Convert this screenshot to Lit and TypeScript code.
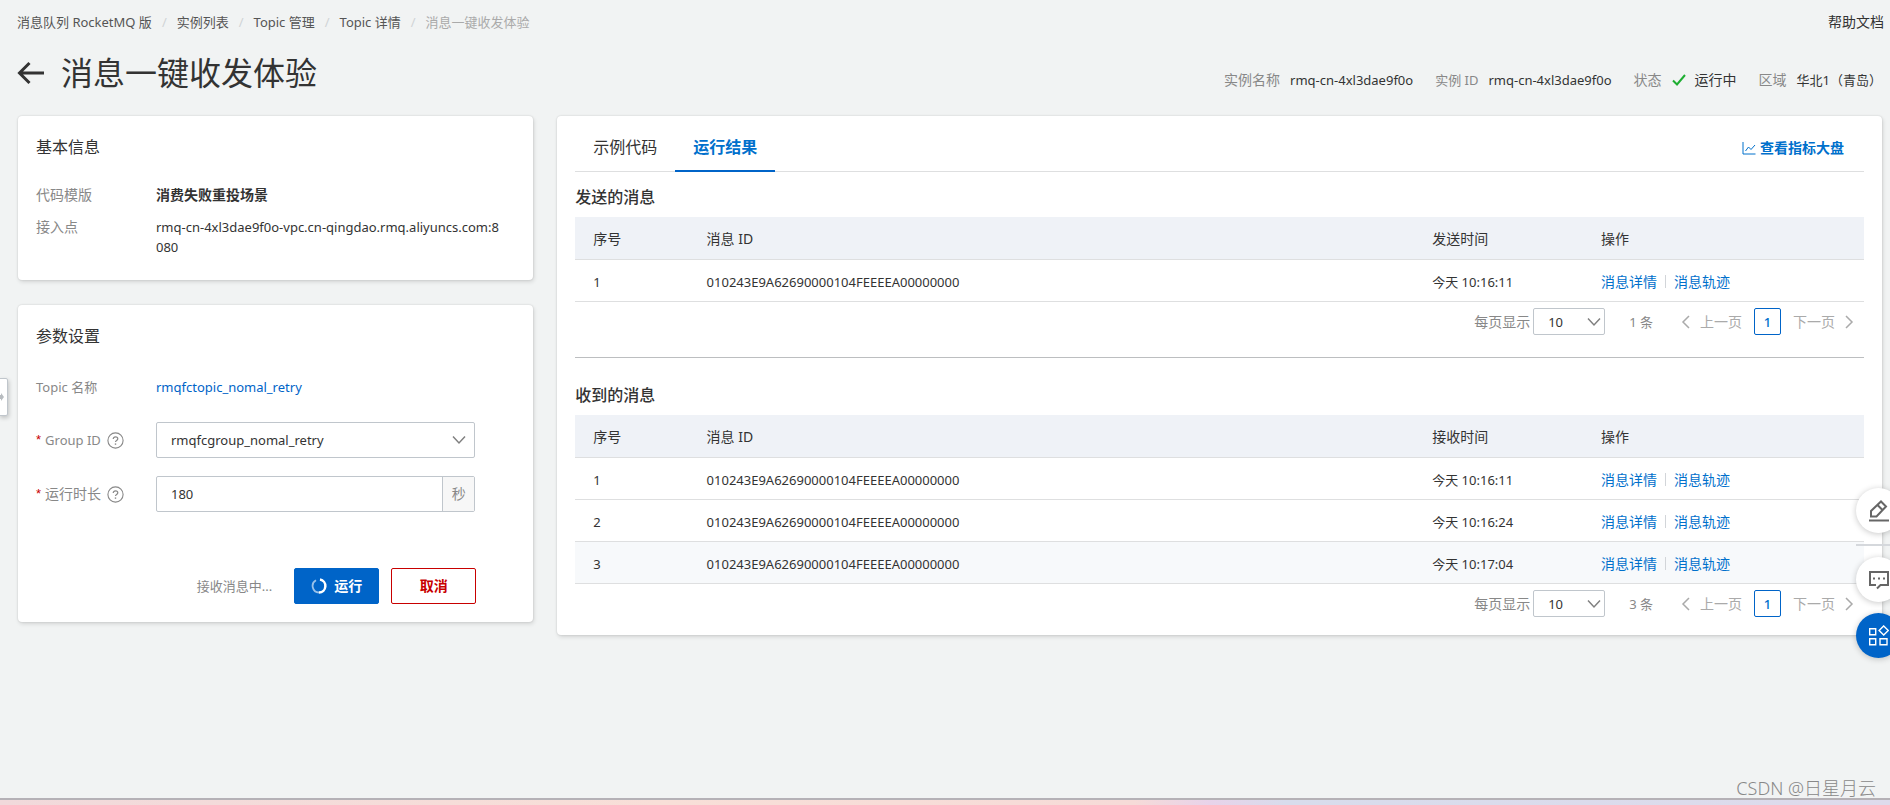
import { LitElement, html, css } from "lit";
import { customElement, property } from "lit/decorators.js";

interface Message {
  id: string;
  time: string;
  hovered?: boolean;
}

const MESSAGE_ID = "010243E9A62690000104FEEEEA00000000";

const SENT: Message[] = [{ id: MESSAGE_ID, time: "今天 10:16:11" }];

const RECEIVED: Message[] = [
  { id: MESSAGE_ID, time: "今天 10:16:11" },
  { id: MESSAGE_ID, time: "今天 10:16:24" },
  { id: MESSAGE_ID, time: "今天 10:17:04", hovered: true },
];

const shared = css`
  *,
  *::before,
  *::after {
    box-sizing: border-box;
  }
  h1,
  h2,
  h3,
  p,
  dl,
  dd,
  ol {
    margin: 0;
    padding: 0;
  }
  a {
    color: #0070cc;
    text-decoration: none;
  }
  button,
  input,
  select {
    font: inherit;
    margin: 0;
  }
  svg {
    display: block;
    fill: none;
    flex: none;
  }
  .select {
    display: grid;
    align-items: center;
  }
  .select > * {
    grid-area: 1 / 1;
  }
  .select select {
    appearance: none;
    width: 100%;
    height: 100%;
    border: 1px solid #c0c6cc;
    border-radius: 2px;
    background: #fff;
    color: #333;
    padding: 0 14px;
    font-size: 13px;
  }
  .select svg {
    justify-self: end;
    pointer-events: none;
    stroke: #808080;
  }
`;

const chevron = html`<svg width="14" height="10" viewBox="0 0 14 10" aria-hidden="true">
  <path d="M1 1.500 7 8l6-6.500" stroke-width="1.500" />
</svg>`;

const helpIcon = html`<svg class="help" width="17" height="17" viewBox="0 0 17 17" aria-hidden="true">
  <circle cx="8.500" cy="8.500" r="7.600" stroke-width="1.100" />
  <path d="M6.200 7c0-1.400 1-2.200 2.300-2.200s2.300.8 2.300 2c0 1.700-2.300 1.700-2.300 3.300" stroke-width="1.200" />
  <path d="M8.500 11.400v1.400" stroke-width="1.400" />
</svg>`;

@customElement("message-list")
export class MessageList extends LitElement {
  @property() heading = "";
  @property() timeLabel = "";
  @property({ attribute: false }) messages: Message[] = [];

  static styles = [
    shared,
    css`
      :host {
        display: block;
      }
      h3 {
        font-size: 16px;
        line-height: 24px;
        font-weight: 500;
        color: #333;
        margin-bottom: 8px;
      }
      table {
        width: 100%;
        border-collapse: separate;
        border-spacing: 0;
        table-layout: fixed;
        color: #333;
      }
      .index {
        width: 8.8%;
      }
      .time {
        width: 13.1%;
      }
      .actions {
        width: 21.8%;
      }
      th,
      td {
        text-align: left;
        font-weight: 400;
        height: 42px;
        padding: 2px 18px 0;
        border-bottom: 1px solid #dedfe0;
        font-size: 13px;
      }
      th {
        height: 43px;
        background: #eff2f7;
        font-size: 14px;
      }
      .hovered td {
        background: #f7f9fb;
      }
      .links {
        display: flex;
        align-items: center;
        font-size: 14px;
      }
      .links a + a {
        display: flex;
        align-items: center;
      }
      .links a + a::before {
        content: "";
        height: 13px;
        border-left: 1px solid #d2d5d9;
        margin: 0 8px;
      }
      .pager {
        display: flex;
        justify-content: flex-end;
        align-items: center;
        padding: 6px 10px 0 0;
        color: #888;
        font-size: 14px;
        line-height: 20px;
      }
      .size {
        display: flex;
        align-items: center;
        gap: 3px;
      }
      .pager .select {
        width: 72px;
        height: 27px;
      }
      .pager .select svg {
        margin-right: 4px;
      }
      .total {
        font-size: 13px;
        margin: 0 28px 0 24px;
      }
      nav {
        display: flex;
        align-items: center;
        gap: 12px;
      }
      nav button {
        display: flex;
        align-items: center;
        gap: 10px;
        padding: 0;
        border: 0;
        background: none;
        color: #aaa;
      }
      nav svg {
        stroke: #aaa;
      }
      nav .current {
        width: 27px;
        height: 27px;
        justify-content: center;
        border: 1px solid #0064c8;
        border-radius: 2px;
        background: #fff;
        color: #0070cc;
        font-size: 13px;
        font-weight: 500;
      }
    `,
  ];

  render() {
    return html`
      <h3>${this.heading}</h3>
      <table>
        <thead>
          <tr>
            <th class="index" scope="col">序号</th>
            <th scope="col">消息 ID</th>
            <th class="time" scope="col">${this.timeLabel}</th>
            <th class="actions" scope="col">操作</th>
          </tr>
        </thead>
        <tbody>
          ${this.messages.map(
            (m, i) => html`<tr class=${m.hovered ? "hovered" : ""}>
              <td>${i + 1}</td>
              <td>${m.id}</td>
              <td>${m.time}</td>
              <td><div class="links"><a href="#detail">消息详情</a><a href="#trace">消息轨迹</a></div></td>
            </tr>`
          )}
        </tbody>
      </table>
      <div class="pager">
        <div class="size">
          <label for="size">每页显示</label>
          <div class="select">
            <select id="size"><option>10</option></select>
            ${chevron}
          </div>
        </div>
        <span class="total">${this.messages.length} 条</span>
        <nav aria-label="分页">
          <button type="button">
            <svg width="9" height="14" viewBox="0 0 9 14"><path d="M8 1 2 7l6 6" stroke-width="1.500" /></svg>上一页
          </button>
          <button type="button" class="current">1</button>
          <button type="button">
            下一页<svg width="9" height="14" viewBox="0 0 9 14"><path d="m1 1 6 6-6 6" stroke-width="1.500" /></svg>
          </button>
        </nav>
      </div>
    `;
  }
}

@customElement("app-root")
export class AppRoot extends LitElement {
  static styles = [
    shared,
    css`
      :host {
        display: flex;
        flex-direction: column;
        min-height: 100vh;
        box-sizing: border-box;
        background: #f1f3f3;
        color: #333;
        font-family: "Noto Sans", "Noto Sans CJK SC", sans-serif;
        font-size: 14px;
        line-height: 20px;
      }
      .top {
        display: flex;
        justify-content: space-between;
        padding: 12px 6px 0 17px;
      }
      .top a {
        color: #333;
      }
      .top .crumbs a {
        color: #555;
      }
      .crumbs {
        display: flex;
        list-style: none;
        font-size: 13px;
      }
      .crumbs li + li::before {
        content: "/";
        color: #d0d3d6;
        margin: 0 10px;
      }
      .crumbs [aria-current] {
        color: #aaa;
      }
      .heading {
        display: flex;
        justify-content: space-between;
        align-items: flex-end;
        padding: 21px 8px 23px 17px;
      }
      .title {
        display: flex;
        align-items: center;
        gap: 16px;
      }
      .back {
        padding: 0;
        border: 0;
        background: none;
      }
      .back svg {
        stroke: #333;
      }
      h1 {
        font-size: 32px;
        line-height: 40px;
        font-weight: 400;
      }
      .meta {
        display: flex;
        gap: 22px;
        padding-bottom: 3px;
      }
      .meta div {
        display: flex;
        gap: 10px;
      }
      .meta dt,
      .label {
        color: #888;
      }
      .meta dd {
        display: flex;
        align-items: center;
        gap: 9px;
      }
      .meta .latin,
      .latin {
        font-size: 13px;
      }
      main {
        flex: 1;
        display: grid;
        grid-template-columns: minmax(0, 7fr) minmax(0, 18fr);
        gap: 24px;
        align-items: start;
        padding: 0 8px 24px 18px;
      }
      .side {
        display: grid;
        gap: 25px;
      }
      .card {
        background: #fff;
        border-radius: 4px;
        box-shadow: 0 0 2px rgba(0, 0, 0, 0.16), 1px 2px 4px rgba(0, 0, 0, 0.12);
      }
      .info,
      .params {
        padding: 19px 18px;
      }
      h2 {
        font-size: 16px;
        line-height: 24px;
        font-weight: 400;
      }
      .row {
        display: grid;
        grid-template-columns: 120px minmax(0, 1fr);
        padding-right: 10px;
      }
      .info dl {
        display: grid;
        gap: 12px;
        padding: 26px 0 4px;
      }
      .info dd {
        word-break: break-all;
      }
      .info .template {
        font-weight: 700;
      }
      .params {
        padding-bottom: 18px;
      }
      .params .row {
        align-items: center;
        padding-right: 40px;
        margin-bottom: 18px;
      }
      .params .topic {
        margin: 29px 0 25px;
      }
      .topic a {
        color: #0064c8;
      }
      .label {
        display: flex;
        align-items: center;
        gap: 4px;
      }
      .required {
        color: #c80000;
        font-family: "Liberation Sans", sans-serif;
        font-size: 13px;
      }
      .help {
        stroke: #888;
        margin-left: 2px;
      }
      .field {
        height: 36px;
      }
      .field svg {
        margin-right: 9px;
      }
      .duration {
        display: flex;
        height: 36px;
        border: 1px solid #c0c6cc;
        border-radius: 2px;
      }
      .duration input {
        flex: 1;
        min-width: 0;
        border: 0;
        padding: 0 14px;
        background: none;
        color: #333;
        font-size: 13px;
      }
      .duration span {
        display: grid;
        place-items: center;
        width: 32px;
        border-left: 1px solid #c0c6cc;
        background: #f7f7f7;
        color: #888;
      }
      .buttons {
        display: flex;
        justify-content: flex-end;
        align-items: center;
        gap: 12px;
        margin-top: 56px;
        padding-right: 39px;
      }
      .buttons p {
        color: #888;
        margin-right: 10px;
        font-size: 13px;
      }
      .buttons button {
        display: flex;
        align-items: center;
        justify-content: center;
        gap: 7px;
        width: 85px;
        height: 36px;
        border: 1px solid #c80000;
        border-radius: 2px;
        background: #fff;
        color: #c80000;
        font-weight: 700;
      }
      .buttons .run {
        border-color: #0064c8;
        background: #0064c8;
        color: #fff;
      }
      .results {
        padding: 0 18px 18px;
      }
      .tabs {
        display: flex;
        align-items: center;
        border-bottom: 1px solid #dedfe0;
        margin-bottom: 13px;
      }
      .tabs button {
        height: 56px;
        margin-bottom: -1px;
        padding: 8px 18px 0;
        border: 0;
        border-bottom: 2px solid transparent;
        background: none;
        color: #333;
        font-size: 16px;
      }
      .tabs .active {
        color: #0070cc;
        font-weight: 700;
        border-bottom-color: #0064c8;
      }
      .dashboard {
        display: flex;
        align-items: center;
        gap: 4px;
        margin: 8px 20px 0 auto;
        font-weight: 700;
      }
      .dashboard svg {
        stroke: #0070cc;
      }
      hr {
        margin: 22px 0 25px;
        border: 0;
        border-top: 1px solid #bcbec0;
      }
      .handle {
        position: fixed;
        left: -1px;
        top: 378px;
        width: 9px;
        height: 38px;
        padding: 0;
        border: 1px solid #c0c6cc;
        border-radius: 0 2px 2px 0;
        background: #fff;
        box-shadow: 1px 2px 4px rgba(0, 0, 0, 0.2);
      }
      .handle svg {
        fill: #b8bcc0;
      }
      .tools {
        position: fixed;
        right: -11px;
        top: 488px;
        display: grid;
        gap: 11px;
      }
      .tools button {
        display: grid;
        place-items: center;
        width: 45px;
        height: 45px;
        padding: 0;
        border: 0;
        border-radius: 50%;
        background: #fff;
        box-shadow: 0 1px 6px rgba(0, 0, 0, 0.22);
      }
      .tools svg {
        stroke: #666;
      }
      .tools hr {
        width: 45px;
        margin: 0;
        border-top: 2px solid #d5d8dc;
      }
      .tools .apps {
        background: #0064c8;
      }
      .tools .apps svg {
        stroke: #fff;
      }
      footer {
        text-align: right;
      }
      footer p {
        padding-right: 14px;
        color: #888;
        font-size: 18px;
        font-weight: 300;
        line-height: 20px;
      }
      .strip {
        height: 7px;
        border-top: 2px solid #b5b1b6;
        background: linear-gradient(90deg, #f1d9db, #f8dfd8 35%, #f6dbd8 60%, #e8d3ea 64%, #d8dcec 68%, #dedbec);
      }
    `,
  ];

  render() {
    return html`
      <header>
        <div class="top">
          <nav aria-label="面包屑">
            <ol class="crumbs">
              <li><a href="#mq">消息队列 RocketMQ 版</a></li>
              <li><a href="#instances">实例列表</a></li>
              <li><a href="#topics">Topic 管理</a></li>
              <li><a href="#topic">Topic 详情</a></li>
              <li aria-current="page">消息一键收发体验</li>
            </ol>
          </nav>
          <a href="#help">帮助文档</a>
        </div>
        <div class="heading">
          <div class="title">
            <button class="back" type="button" aria-label="返回">
              <svg width="28" height="24" viewBox="0 0 28 24">
                <path d="M27 12H3M12.500 2 2.500 12l10 10" stroke-width="3" />
              </svg>
            </button>
            <h1>消息一键收发体验</h1>
          </div>
          <dl class="meta">
            <div><dt>实例名称</dt><dd class="latin">rmq-cn-4xl3dae9f0o</dd></div>
            <div><dt class="latin">实例 ID</dt><dd class="latin">rmq-cn-4xl3dae9f0o</dd></div>
            <div>
              <dt>状态</dt>
              <dd>
                <svg width="14" height="12" viewBox="0 0 14 12" stroke="#1eae32" aria-hidden="true">
                  <path d="m1 6.500 4 4L13 1" stroke-width="2" />
                </svg>
                运行中
              </dd>
            </div>
            <div><dt>区域</dt><dd class="latin">华北1（青岛）</dd></div>
          </dl>
        </div>
      </header>

      <main>
        <div class="side">
          <section class="card info">
            <h2>基本信息</h2>
            <dl>
              <div class="row"><dt class="label">代码模版</dt><dd class="template">消费失败重投场景</dd></div>
              <div class="row">
                <dt><span class="label">接入点</span></dt>
                <dd class="latin">rmq-cn-4xl3dae9f0o-vpc.cn-qingdao.rmq.aliyuncs.com:8080</dd>
              </div>
            </dl>
          </section>

          <form class="card params" @submit=${(e: Event) => e.preventDefault()}>
            <h2>参数设置</h2>
            <div class="row topic">
              <span class="label latin">Topic 名称</span>
              <a class="latin" href="#topic">rmqfctopic_nomal_retry</a>
            </div>
            <div class="row">
              <label class="label latin" for="group"><span class="required">*</span>Group ID ${helpIcon}</label>
              <div class="select field">
                <select id="group"><option>rmqfcgroup_nomal_retry</option></select>
                ${chevron}
              </div>
            </div>
            <div class="row">
              <label class="label" for="duration"><span class="required">*</span>运行时长 ${helpIcon}</label>
              <div class="duration"><input id="duration" type="text" value="180" /><span>秒</span></div>
            </div>
            <div class="buttons">
              <p>接收消息中...</p>
              <button class="run" type="submit">
                <svg width="16" height="16" viewBox="0 0 16 16" stroke="#fff" aria-hidden="true">
                  <path d="M9 1.600A6.500 6.500 0 0 1 8 14.500" stroke-width="2.500" />
                  <path d="M8 14.500A6.500 6.500 0 0 1 5 2.300" stroke-width="1.800" stroke-opacity=".6" />
                </svg>
                运行
              </button>
              <button type="button">取消</button>
            </div>
          </form>
        </div>

        <section class="card results">
          <div class="tabs">
            <button type="button">示例代码</button>
            <button type="button" class="active">运行结果</button>
            <a class="dashboard" href="#dashboard">
              <svg width="14" height="14" viewBox="0 0 14 14" aria-hidden="true">
                <path d="M1 1v12h12.500" />
                <path d="m3.500 10 3-4 2.500 2.500L13 4" />
              </svg>
              查看指标大盘
            </a>
          </div>
          <message-list heading="发送的消息" .timeLabel=${"发送时间"} .messages=${SENT}></message-list>
          <hr />
          <message-list heading="收到的消息" .timeLabel=${"接收时间"} .messages=${RECEIVED}></message-list>
        </section>
      </main>

      <footer>
        <p>CSDN @日星月云</p>
        <div class="strip"></div>
      </footer>

      <button class="handle" type="button" aria-label="展开菜单">
        <svg width="6" height="10" viewBox="0 0 6 10"><path d="M-1 3V7H1V9L4 5 1 1V3Z" /></svg>
      </button>

      <aside class="tools">
        <button type="button" aria-label="编辑">
          <svg width="22" height="22" viewBox="0 0 22 22">
            <path d="M1 20.500h20" stroke-width="2" />
            <path d="M3 16.500v-5.500L13 1.500l5 5L8.500 16.500ZM9.500 5l5 5" stroke-width="2" />
          </svg>
        </button>
        <hr />
        <button type="button" aria-label="反馈">
          <svg width="22" height="20" viewBox="0 0 22 20">
            <path d="M9 18.500 12.500 15H20V2H2v13h6" stroke-width="2" />
            <path d="M5 8.500h2M10 8.500h2M15 8.500h2" stroke-width="2" />
          </svg>
        </button>
        <button class="apps" type="button" aria-label="应用">
          <svg width="20" height="21" viewBox="0 0 20 21">
            <path d="M.7 3.700h6v6h-6zM.7 13.700h6v6h-6zM11 13.700h7v6h-7zM14.700.9l4.600 4.600-4.600 4.600-4.600-4.600z" stroke-width="1.400" />
          </svg>
        </button>
      </aside>
    `;
  }
}
